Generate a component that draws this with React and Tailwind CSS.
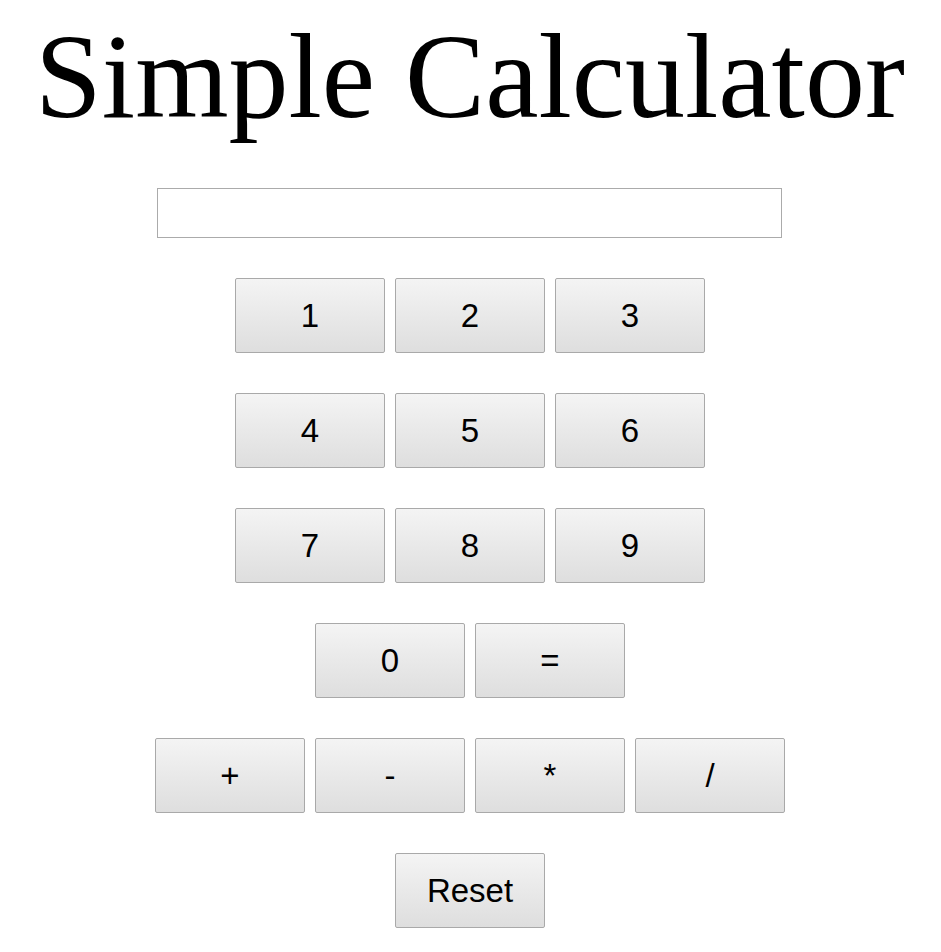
import React, { useState } from "react";

const rows = [
    ["1", "2", "3"],
    ["4", "5", "6"],
    ["7", "8", "9"],
    ["0", "="],
    ["+", "-", "*", "/"],
    ["Reset"],
];

function Key({ label, onPress }) {
    return (
        <button
            type="button"
            onClick={() => onPress(label)}
            className="w-[150px] h-[75px] border border-[#a9a9a9] rounded-[2px] bg-gradient-to-b from-[#f4f4f4] to-[#dedede] text-[33px] text-black font-['Liberation_Sans',Arial,sans-serif] leading-none"
        >
            {label}
        </button>
    );
}

export default function App() {
    const [display, setDisplay] = useState("");

    const handlePress = (key) => {
        if (key === "Reset") return setDisplay("");
        if (key === "=") {
            try {
                // eslint-disable-next-line no-new-func
                setDisplay(String(Function(`return (${display})`)()));
            } catch {
                setDisplay("Error");
            }
            return;
        }
        setDisplay((d) => d + key);
    };

    return (
        <div className="w-[940px] min-h-screen bg-white flex flex-col items-center">
            <h1 className="mt-[17px] text-[120px] leading-[120px] font-normal text-black font-['Liberation_Serif','Times_New_Roman',serif]">
                Simple Calculator
            </h1>

            <input
                type="text"
                value={display}
                readOnly
                className="mt-[51px] mr-[1px] w-[625px] h-[50px] border border-[#ababab] bg-white px-2 text-[28px] font-['Liberation_Sans',Arial,sans-serif] outline-none"
            />

            <div className="mt-[40px] flex flex-col items-center gap-[40px]">
                {rows.map((row, i) => (
                    <div key={i} className="flex gap-[10px]">
                        {row.map((k) => (
                            <Key key={k} label={k} onPress={handlePress} />
                        ))}
                    </div>
                ))}
            </div>
        </div>
    );
}
